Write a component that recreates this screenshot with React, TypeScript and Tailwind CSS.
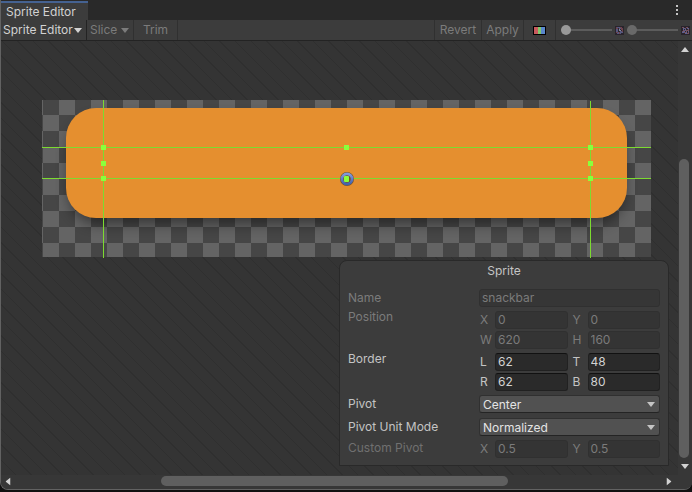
import { useId } from "react";

const Caret = ({ className }: { className: string }) => (
  <svg viewBox="0 0 8 5" className={className} fill="currentColor" aria-hidden="true">
    <path d="M0 0h8L4 5z" />
  </svg>
);

function Field({ label, value, disabled }: { label: string; value: string; disabled?: boolean }) {
  const id = useId();
  const tone = disabled
    ? "border-[#303030] bg-[#343434] text-[#7b7b7b]"
    : "border-[#212121] border-t-[#111111] bg-[#2a2a2a] text-[#d2d2d2]";
  return (
    <div className="flex min-w-0 flex-1 items-center">
      <label htmlFor={id} className={`w-4 shrink-0 pl-px ${disabled ? "text-[#7b7b7b]" : "text-[#c4c4c4]"}`}>
        {label}
      </label>
      <input
        id={id}
        defaultValue={value}
        disabled={disabled}
        className={`h-[18px] w-full min-w-0 rounded-[3px] border px-0.5 outline-none ${tone}`}
      />
    </div>
  );
}

function Choice({ label, value, options }: { label: string; value: string; options: string[] }) {
  const id = useId();
  return (
    <div className="flex h-[18px] items-center">
      <label htmlFor={id} className="w-[131px] shrink-0">
        {label}
      </label>
      <div className="relative flex-1">
        <select
          id={id}
          defaultValue={value}
          className="block h-[18px] w-full appearance-none rounded-[3px] border border-[#303030] border-b-[#242424] bg-[#515151] px-[3px] text-[#e4e4e4] outline-none"
        >
          {options.map((o) => (
            <option key={o}>{o}</option>
          ))}
        </select>
        <Caret className="pointer-events-none absolute top-[7px] right-[5px] h-[5px] w-2 text-[#c4c4c4]" />
      </div>
    </div>
  );
}

function Mip({ fine }: { fine?: boolean }) {
  return (
    <svg viewBox="0 0 9 9" className="h-[9px] w-[9px] shrink-0" aria-hidden="true" shapeRendering="crispEdges">
      <path fill="#29242c" d="M0 0h9v9H0z" />
      {fine ? (
        <>
          <path fill="#75505c" d="M1 1h2v1H1zM4 2h1V1h2v1H5v1H4zM1 5h1V4h2v1H2v1H1zM5 4h2V3h1v2H6v1H5zM3 7V6h2v1zM6 7h1V6h1v2H6z" />
          <path fill="#5d6090" d="M2 2h2v1H3v1H2zM6 2h2v1H6zM4 3h1v2H4zM2 5h2v1H3v1H1V6h1zM5 6h1v2H4V7h1zM7 5h1v1H7z" />
        </>
      ) : (
        <>
          <path fill="#55577e" d="M2 1h3v1h1v1H4V2H2zM1 3h2v3H1zM5 5h2v1h1v1H6v1H5zM3 6h1v2H2V7h1z" />
          <path fill="#6c434d" d="M1 1h1v1h1v1H1zM5 1h2v1h1v2H6V2H5zM1 6h2v1H1zM4 6h1v2H4zM7 4h1v2H7z" />
          <path fill="#85859c" d="M4 3h1v1h1v1H4z" />
        </>
      )}
    </svg>
  );
}

function SpriteCanvas() {
  const handles = [
    [61, 47],
    [61, 63],
    [61, 78],
    [304, 47],
    [548, 47],
    [548, 63],
    [548, 78],
  ];
  return (
    <svg viewBox="0 0 609 158" className="block w-full" role="img" aria-label="snackbar sprite">
      <defs>
        <pattern id="checker" x="1" y="0" width="32" height="32" patternUnits="userSpaceOnUse">
          <path fill="#464646" d="M0 0h32v32H0z" />
          <path fill="#646464" d="M16 0h16v16H16zM0 16h16v16H0z" />
        </pattern>
        <filter id="shadow" x="-10%" y="-20%" width="120%" height="150%">
          <feGaussianBlur stdDeviation="7" />
        </filter>
        <linearGradient id="ring" x1="0" y1="0" x2="0" y2="1">
          <stop offset="0" stopColor="#8299dc" />
          <stop offset="1" stopColor="#4362ad" />
        </linearGradient>
        <clipPath id="bounds">
          <path d="M0 0h609v157H0z" />
        </clipPath>
      </defs>
      <g clipPath="url(#bounds)">
        <g transform="translate(0 -1)">
          <path fill="url(#checker)" d="M0 0h609v158H0z" />
        </g>
        <rect x="27" y="18" width="555" height="106" rx="30" fill="#000" opacity=".45" filter="url(#shadow)" />
      </g>
      <rect x="24" y="8" width="561" height="110" rx="30" fill="#e58f2f" />
      <g fill="#7cdb30" shapeRendering="crispEdges">
        <rect x="0" y="47" width="609" height="1" />
        <rect x="0" y="78" width="609" height="1" />
        <rect x="61" y="0" width="1" height="158" />
        <rect x="548" y="1" width="1" height="157" />
      </g>
      <circle cx="305" cy="79" r="5" fill="none" stroke="#755326" strokeWidth="4" />
      <circle cx="305" cy="79" r="5" fill="none" stroke="url(#ring)" strokeWidth="3" />
      <circle cx="305" cy="79" r="3.500" fill="#755326" />
      <g fill="#8bff3c" shapeRendering="crispEdges">
        {handles.map(([x, y]) => (
          <rect key={`${x}-${y}`} x={x - 2} y={y - 2} width="5" height="5" />
        ))}
      </g>
      <rect x="302" y="76" width="5" height="6" rx="1" fill="#8bff3c" />
    </svg>
  );
}

function Inspector() {
  return (
    <form className="absolute right-[9px] bottom-[9px] w-[330px] rounded-t-lg border border-[#292929] bg-[#3c3c3c] px-2 pb-[7px] leading-[18px] text-[#c4c4c4]">
      <h2 className="pt-px text-center">Sprite</h2>
      <div className="mt-[9px] flex text-[#7b7b7b]">
        <label htmlFor="sprite-name" className="w-[131px] shrink-0">
          Name
        </label>
        <input
          id="sprite-name"
          disabled
          defaultValue="snackbar"
          className="h-[18px] min-w-0 flex-1 rounded-[3px] border border-[#303030] bg-[#363636] px-0.5"
        />
      </div>
      <fieldset className="mt-1 flex">
        <legend className="float-left -mt-[3px] w-[131px] text-[#7b7b7b]">Position</legend>
        <div className="grid flex-1 grid-cols-2 gap-x-1 gap-y-0.5">
          <Field label="X" value="0" disabled />
          <Field label="Y" value="0" disabled />
          <Field label="W" value="620" disabled />
          <Field label="H" value="160" disabled />
        </div>
      </fieldset>
      <fieldset className="mt-1 flex">
        <legend className="float-left -mt-[3px] w-[131px]">Border</legend>
        <div className="grid flex-1 grid-cols-2 gap-x-1 gap-y-0.5">
          <Field label="L" value="62" />
          <Field label="T" value="48" />
          <Field label="R" value="62" />
          <Field label="B" value="80" />
        </div>
      </fieldset>
      <div className="mt-1 grid gap-[5px]">
        <Choice label="Pivot" value="Center" options={["Center", "Top Left", "Custom"]} />
        <Choice label="Pivot Unit Mode" value="Normalized" options={["Normalized", "Pixels"]} />
      </div>
      <fieldset className="mt-1 flex">
        <legend className="float-left -mt-px w-[131px] text-[#707070]">Custom Pivot</legend>
        <div className="grid flex-1 grid-cols-2 gap-x-1">
          <Field label="X" value="0.5" disabled />
          <Field label="Y" value="0.5" disabled />
        </div>
      </fieldset>
    </form>
  );
}

const slider =
  "h-[10px] min-w-0 appearance-none bg-[linear-gradient(#5c5c5c,#5c5c5c)] bg-[length:100%_2px] bg-center bg-no-repeat [&::-webkit-slider-thumb]:h-[10px] [&::-webkit-slider-thumb]:w-[10px] [&::-webkit-slider-thumb]:appearance-none [&::-webkit-slider-thumb]:rounded-full";

export default function App() {
  return (
    <div className="h-screen bg-[#111111] pb-0.5 font-['Inter','Liberation_Sans',sans-serif] text-xs">
      <div className="flex h-full flex-col overflow-hidden rounded-b-lg border-b border-l border-[#626262] bg-[#383838]">
        <header className="flex h-5 shrink-0 justify-between bg-[#292929]">
          <h1 className="mt-px h-[19px] w-[87px] border-t-2 border-[#456291] bg-[#3c3c3c] pl-[5px] leading-[18px] whitespace-nowrap text-[#d2d2d2]">
            Sprite Editor
          </h1>
          <button aria-label="Window options" className="mr-3.5 flex flex-col items-center justify-center gap-0.5">
            <i className="size-0.5 bg-[#c4c4c4]" />
            <i className="size-0.5 bg-[#c4c4c4]" />
            <i className="size-0.5 bg-[#c4c4c4]" />
          </button>
        </header>
        <nav className="flex h-[21px] shrink-0 border-b border-[#232323] bg-[#3c3c3c] leading-5 text-[#7b7b7b]">
          <button className="flex w-[86px] items-center justify-between border-r border-[#232323] pr-1 pl-0.5 whitespace-nowrap text-[#d2d2d2]">
            Sprite Editor
            <Caret className="h-[5px] w-2 shrink-0" />
          </button>
          <button disabled className="flex w-[47px] items-center justify-between border-r border-[#303030] pr-1 pl-[3px]">
            Slice
            <Caret className="h-[5px] w-2 shrink-0" />
          </button>
          <button disabled className="w-11 border-r border-[#303030]">
            Trim
          </button>
          <div className="flex-1 border-r border-[#303030]" />
          <button disabled className="w-[47px] border-r border-[#303030]">
            Revert
          </button>
          <button disabled className="w-[42px] border-r border-[#303030]">
            Apply
          </button>
          <button aria-label="Color channels" className="flex w-8 items-center justify-center border-r border-[#303030]">
            <svg viewBox="0 0 13 9" className="h-[9px] w-[13px]" shapeRendering="crispEdges" aria-hidden="true">
              <path fill="#000" d="M0 0h13v9H0z" />
              <path fill="#c85a5e" d="M1 1h4v7H1z" />
              <path fill="#80c76c" d="M5 1h3v7H5z" />
              <path fill="#5a87cc" d="M8 1h4v7H8z" />
            </svg>
          </button>
          <div className="flex items-center gap-[3px] pr-0.5 pl-[5px]">
            <input
              type="range"
              aria-label="Alpha"
              defaultValue={0}
              className={`${slider} w-[51px] [&::-webkit-slider-thumb]:bg-[#999999]`}
            />
            <Mip />
            <input
              type="range"
              aria-label="Mip level"
              defaultValue={0}
              className={`${slider} w-[51px] [&::-webkit-slider-thumb]:bg-[#696969]`}
            />
            <Mip fine />
          </div>
        </nav>
        <div className="flex min-h-0 flex-1">
          <main className="relative min-w-0 flex-1 bg-[#343434] bg-[repeating-linear-gradient(45deg,#343434_0px,#343434_10px,#2f2f2f_10px,#2f2f2f_11px)]">
            <div className="pt-[59px] pr-[27px] pl-[41px]">
              <SpriteCanvas />
            </div>
            <Inspector />
          </main>
          <div className="flex w-[14px] shrink-0 flex-col items-center bg-[#373737] pt-1.5">
            <button aria-label="Scroll up">
              <Caret className="block h-[5px] w-2 rotate-180 text-[#d2d2d2]" />
            </button>
            <div className="flex w-full flex-1 flex-col pt-[107px] pr-[3px] pl-px">
              <div className="w-[10px] flex-1 rounded-full bg-[#5f5f5f]" />
            </div>
            <button aria-label="Scroll down" className="my-1.5">
              <Caret className="block h-[5px] w-2 text-[#d2d2d2]" />
            </button>
          </div>
        </div>
        <div className="flex h-[14px] shrink-0 items-center bg-[#373737] pr-[19px] pb-0.5 pl-[3px]">
          <button aria-label="Scroll left">
            <Caret className="block h-[5px] w-2 rotate-90 text-[#d2d2d2]" />
          </button>
          <div className="flex flex-1 pr-[157px] pl-[149px]">
            <div className="h-[10px] flex-1 rounded-full bg-[#5f5f5f]" />
          </div>
          <button aria-label="Scroll right">
            <Caret className="block h-[5px] w-2 -rotate-90 text-[#d2d2d2]" />
          </button>
        </div>
      </div>
    </div>
  );
}
